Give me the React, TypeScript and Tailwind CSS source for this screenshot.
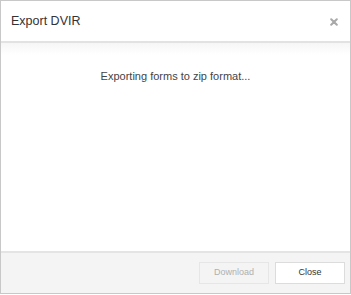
export default function App() {
  return (
    <div className="h-[295px] w-[351px] bg-white" style={{ fontFamily: '"Liberation Sans", Arial, sans-serif' }}>
      <div className="flex h-[294px] w-full flex-col border border-[#c8c8c8]">
        <div className="flex h-[42px] shrink-0 items-center justify-between border-b-2 border-[#e2e2e2] pl-[10px] pr-[12px]">
          <span className="pt-[1px] text-[12.5px] text-[#333]">Export DVIR</span>
          <svg viewBox="0 0 8 8" className="mt-[2px] h-[8px] w-[8px] text-[#a9a9a9]" fill="none" stroke="currentColor" strokeWidth="2" strokeLinecap="round">
            <path d="M1.2 1.2l5.6 5.6M6.8 1.2l-5.6 5.6" />
          </svg>
        </div>
        <div className="flex flex-1 flex-col bg-gradient-to-b from-[#f6f6f6] to-white to-[12px]">
          <p className="pt-[25px] text-center text-[11px] text-[#444]">Exporting forms to zip format...</p>
        </div>
        <div className="flex h-[42px] shrink-0 items-center justify-end gap-[6px] border-t-2 border-[#e4e4e4] bg-[#f4f4f4] pr-[5px]">
          <button type="button" disabled className="h-[22px] w-[70px] border border-[#e6e6e6] bg-[#f4f4f4] text-[9px] text-[#b0b0b0]">
            Download
          </button>
          <button type="button" className="h-[22px] w-[70px] border border-[#dcdcdc] bg-white text-[9px] text-[#333]">
            Close
          </button>
        </div>
      </div>
    </div>
  );
}
